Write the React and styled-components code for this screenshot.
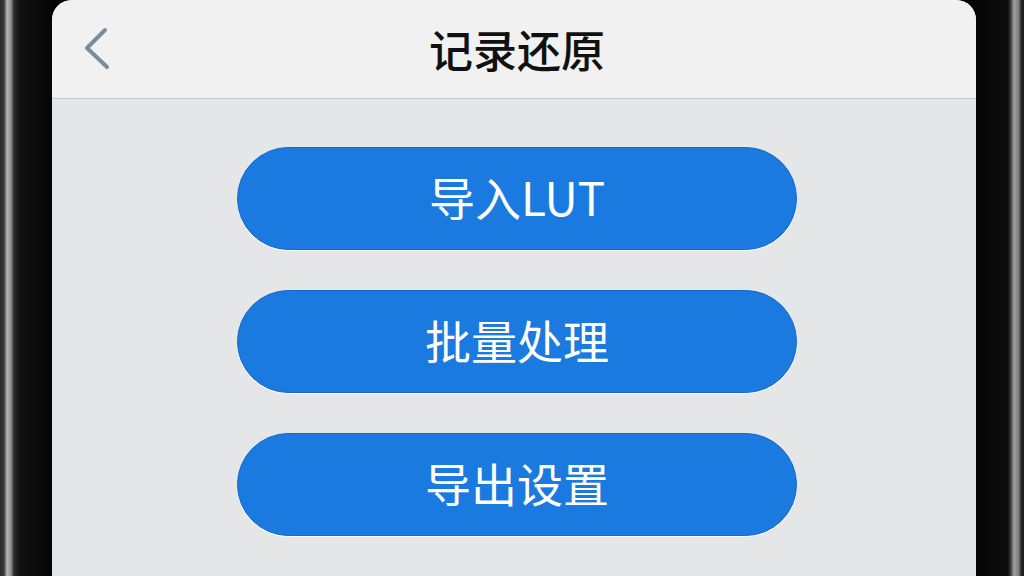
import React from 'react'
import styled, { createGlobalStyle } from 'styled-components'

const GlobalStyle = createGlobalStyle`
  html, body {
    margin: 0;
    padding: 0;
    background: #0b0b0b;
  }
  * {
    box-sizing: border-box;
  }
`

const Device = styled.div`
  width: 1024px;
  height: 576px;
  overflow: hidden;
  display: flex;
  padding: 0 48px 0 52px;
  background: linear-gradient(
    to right,
    #2a2a2a 0px,
    #3a3a3a 4px,
    #b9b9b9 7px,
    #8e8e8e 11px,
    #2c2c2c 14px,
    #111 20px,
    #050505 52px,
    #050505 976px,
    #0d0d0d 1008px,
    #444 1011px,
    #a0a0a0 1014px,
    #7a7a7a 1019px,
    #2a2a2a 1021px,
    #1a1a1a 1024px
  );
`

const Screen = styled.div`
  flex: 1;
  display: flex;
  flex-direction: column;
  border-radius: 20px 20px 0 0;
  overflow: hidden;
  background: #e4e6e8;
  font-family: 'Noto Sans CJK SC', 'Noto Sans', sans-serif;
`

const Header = styled.header`
  height: 99px;
  flex-shrink: 0;
  display: grid;
  grid-template-columns: 1fr auto 1fr;
  align-items: center;
  background: #f1f1f1;
  border-bottom: 1.5px solid #c6c7c8;
`

const BackButton = styled.button`
  justify-self: start;
  display: flex;
  align-items: center;
  padding: 0 0 0 32px;
  margin: 0;
  border: 0;
  background: none;
  cursor: pointer;
`

const Title = styled.h1`
  margin: 0 0 0 6px;
  font-size: 44px;
  font-weight: 500;
  color: #111;
  letter-spacing: 0;
`

const Content = styled.main`
  flex: 1;
  display: flex;
  flex-direction: column;
  align-items: center;
  gap: 40px;
  padding: 48px 0 0 6px;
`

const ActionButton = styled.button`
  width: 560px;
  height: 103px;
  flex-shrink: 0;
  padding: 0 0 5px;
  border-radius: 52px;
  border: 1px solid #1567c9;
  background: #1a7ae0;
  box-shadow: 0 1px 0 rgba(255, 255, 255, 0.9);
  color: #fff;
  font-family: inherit;
  font-size: 46px;
  font-weight: 400;
  cursor: pointer;
`

const actions = ['导入LUT', '批量处理', '导出设置']

const ChevronLeft = () => (
  <svg width='28' height='46' viewBox='0 0 28 46' fill='none'>
    <path
      d='M21 4 L3 22 L23 41'
      stroke='#7b8d9a'
      strokeWidth='4'
      strokeLinecap='round'
      strokeLinejoin='round'
    />
  </svg>
)

const App = () => {
  return (
    <>
      <GlobalStyle />
      <Device>
        <Screen>
          <Header>
            <BackButton aria-label='返回'>
              <ChevronLeft />
            </BackButton>
            <Title>记录还原</Title>
            <span />
          </Header>
          <Content>
            {actions.map((label) => (
              <ActionButton key={label}>{label}</ActionButton>
            ))}
          </Content>
        </Screen>
      </Device>
    </>
  )
}

export default App
